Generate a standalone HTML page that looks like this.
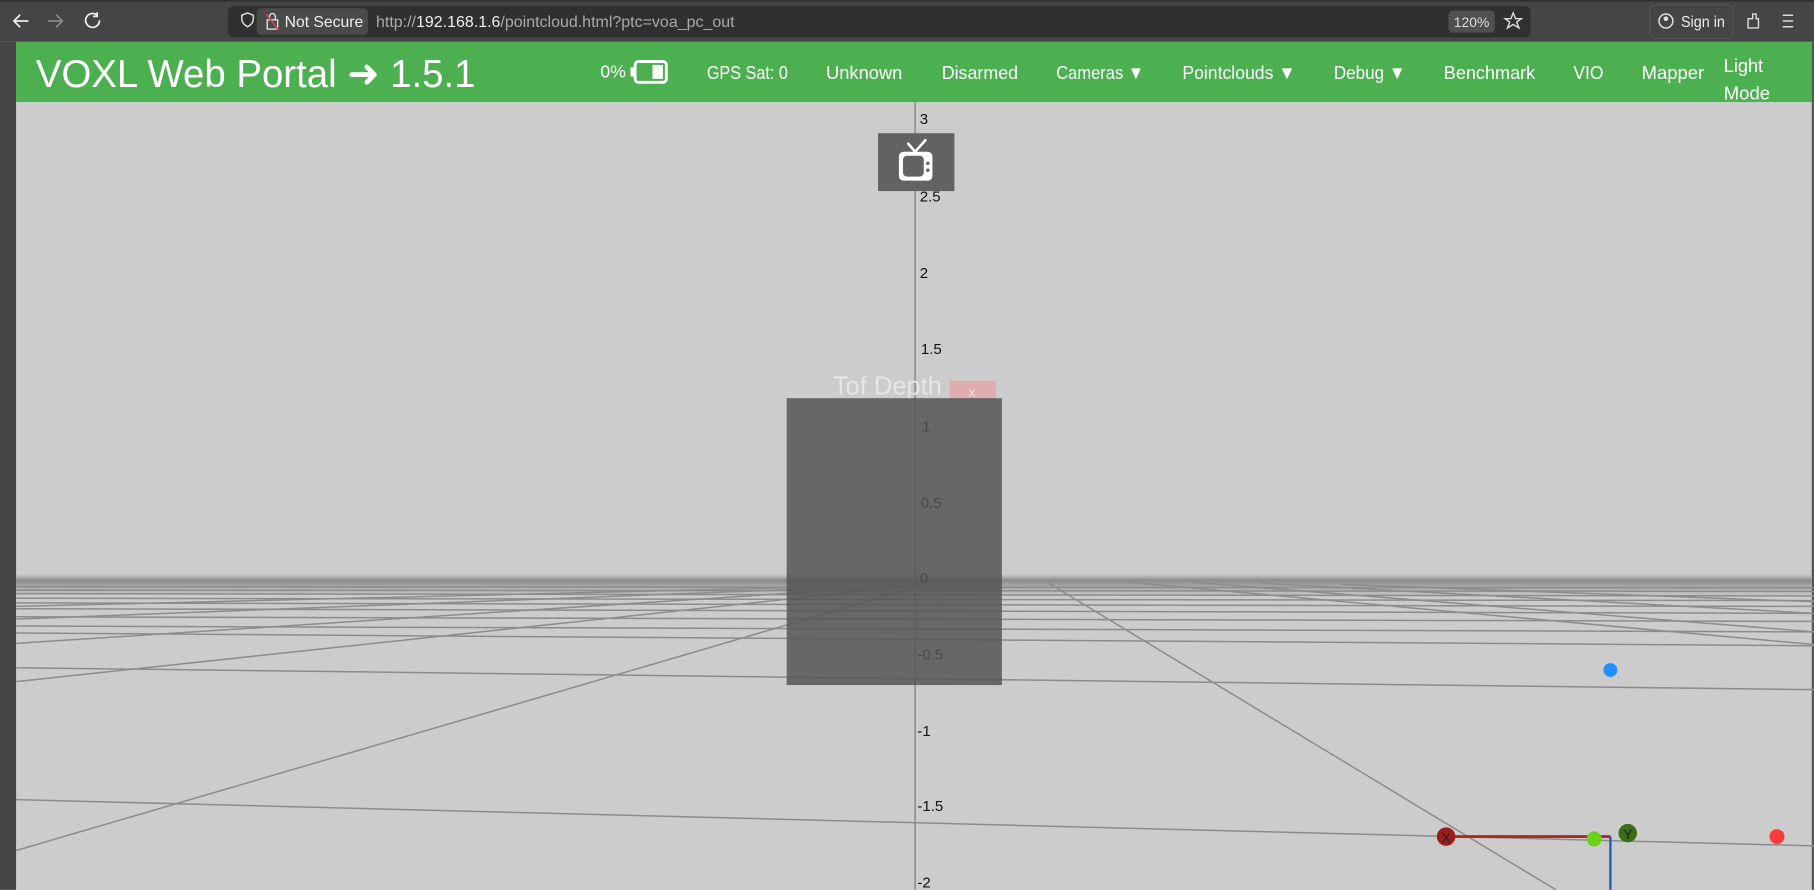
<!DOCTYPE html>
<html><head><meta charset="utf-8"><style>
html,body{margin:0;padding:0;width:1814px;height:890px;overflow:hidden;background:#ccc}
svg{display:block}
text{font-family:"Liberation Sans",sans-serif}
</style></head><body>
<svg width="1814" height="890" viewBox="0 0 1568 769" xmlns="http://www.w3.org/2000/svg">
<!-- browser chrome -->
<rect x="0" y="0" width="1568" height="36" fill="#454545"/>
<rect x="0" y="0" width="1568" height="1" fill="#222"/>
<g stroke="#eee" stroke-width="1.5" fill="none" stroke-linecap="round">
<path d="M12 18h12M12 18l5-5M12 18l5 5"/>
<path d="M42 18h12M54 18l-5-5M54 18l-5 5" stroke="#888"/>
<path d="M84 13a6 6 0 1 0 2 5M84 11v3h-3"/>
</g>
<rect x="197" y="5" width="1126" height="27" rx="5" fill="#303030"/>
<path d="M209 13l5-2 5 2v3c0 4-3 6-5 7c-2-1-5-3-5-7z" fill="none" stroke="#ddd" stroke-width="1.3"/>
<rect x="222" y="7" width="96" height="23" rx="4" fill="#4a4a4a"/>
<rect x="231" y="17" width="9" height="8" fill="none" stroke="#ddd" stroke-width="1.2"/>
<path d="M233 17v-3a2.5 2.5 0 0 1 5 0v3" fill="none" stroke="#ddd" stroke-width="1.2"/>
<path d="M230 12l11 14" stroke="#e04050" stroke-width="1.3"/>
<text x="246" y="23" font-size="13.5" fill="#eee" textLength="68" lengthAdjust="spacingAndGlyphs">Not Secure</text>
<text x="325" y="23" font-size="13.5" fill="#aaa" textLength="310" lengthAdjust="spacingAndGlyphs">http://<tspan fill="#eee">192.168.1.6</tspan>/pointcloud.html?ptc=voa_pc_out</text>
<rect x="1252" y="9" width="40" height="19" rx="4" fill="#505050"/>
<text x="1272" y="23" font-size="12" fill="#ddd" text-anchor="middle">120%</text>
<path d="M1308 11l2 5h5l-4 3 2 5-5-3-5 3 2-5-4-3h5z" fill="none" stroke="#ddd" stroke-width="1.2"/>
<rect x="1426" y="4" width="72" height="29" rx="5" fill="none" stroke="#555"/>
<circle cx="1440" cy="18" r="6" fill="none" stroke="#ddd" stroke-width="1.3"/>
<circle cx="1440" cy="16" r="2" fill="#ddd"/>
<text x="1453" y="23" font-size="13.5" fill="#eee" textLength="38" lengthAdjust="spacingAndGlyphs">Sign in</text>
<path d="M1511 24v-8h4v-4h3v4h2v8z" fill="none" stroke="#ddd" stroke-width="1.2"/>
<path d="M1541 13h9M1541 18h9M1541 23h9" stroke="#ddd" stroke-width="1.3"/>
<!-- left gutter -->
<rect x="0" y="36" width="14" height="733" fill="#454545"/>
<rect x="1566" y="36" width="2" height="733" fill="#555"/>
<!-- green nav -->
<rect x="14" y="36" width="1552" height="52" fill="#4caf50"/>
<text x="31" y="75" font-size="34" fill="#fff" textLength="380" lengthAdjust="spacingAndGlyphs">VOXL Web Portal ➜ 1.5.1</text>
<g font-size="16" fill="#fff">
<text x="519" y="67" font-size="15" textLength="22" lengthAdjust="spacingAndGlyphs">0%</text>
<text x="611" y="68" textLength="70" lengthAdjust="spacingAndGlyphs">GPS Sat: 0</text>
<text x="714" y="68" textLength="66" lengthAdjust="spacingAndGlyphs">Unknown</text>
<text x="814" y="68" textLength="66" lengthAdjust="spacingAndGlyphs">Disarmed</text>
<text x="913" y="68" textLength="76" lengthAdjust="spacingAndGlyphs">Cameras ▼</text>
<text x="1022" y="68" textLength="98" lengthAdjust="spacingAndGlyphs">Pointclouds ▼</text>
<text x="1153" y="68" textLength="62" lengthAdjust="spacingAndGlyphs">Debug ▼</text>
<text x="1248" y="68" textLength="79" lengthAdjust="spacingAndGlyphs">Benchmark</text>
<text x="1360" y="68" textLength="26" lengthAdjust="spacingAndGlyphs">VIO</text>
<text x="1419" y="68" textLength="54" lengthAdjust="spacingAndGlyphs">Mapper</text>
<text x="1490" y="62" textLength="34" lengthAdjust="spacingAndGlyphs">Light</text>
<text x="1490" y="86" textLength="40" lengthAdjust="spacingAndGlyphs">Mode</text>
</g>
<rect x="549" y="53" width="27" height="18" rx="3" fill="none" stroke="#fff" stroke-width="2.5"/>
<rect x="545" y="58" width="4" height="8" fill="#fff"/>
<rect x="564" y="56" width="9" height="12" fill="#fff"/>
<!-- 3D scene -->
<rect x="14" y="88" width="1552" height="681" fill="#cccccc"/>
<defs><linearGradient id="hz" x1="0" y1="0" x2="0" y2="1">
<stop offset="0" stop-color="#999" stop-opacity="0"/><stop offset="0.3" stop-color="#8a8a8a"/><stop offset="1" stop-color="#aaa" stop-opacity="0.3"/></linearGradient></defs>
<rect x="14" y="496" width="1552" height="18" fill="url(#hz)"/>
<g stroke="#8c8c8c" stroke-width="1.3" fill="none">
<path d="M14 507L1568 508M14 510L1568 511M14 513L1568 515M14 517L1568 519M14 521L1568 524M14 526L1568 530M14 533L1568 537M14 541L1568 546M14 547L1568 558M14 577L1568 596M14 691L1568 731"/>
<path d="M14 735L800 505M14 589L800 505M14 556L800 505M14 535L800 505M14 524L800 505"/>
<path d="M905 503L1345 769M975 503L1568 557M1030 503L1568 546M1090 504L1568 530M1160 505L1568 520"/>
</g>
<!-- vertical axis -->
<line x1="791" y1="88" x2="791" y2="769" stroke="#777" stroke-width="1"/>
<g font-size="13" fill="#111">
<text x="795" y="107">3</text><text x="795" y="174">2.5</text><text x="795" y="240">2</text>
<text x="796" y="306">1.5</text><text x="797" y="373">1</text><text x="796" y="439">0.5</text>
<text x="795" y="504">0</text><text x="793" y="570">-0.5</text><text x="793" y="636">-1</text>
<text x="793" y="701">-1.5</text><text x="793" y="767">-2</text>
</g>
<!-- tv box -->
<rect x="759" y="115" width="66" height="50" fill="#626262"/>
<rect x="777" y="131" width="29" height="25" rx="4" fill="#fff"/>
<rect x="780.5" y="134.5" width="18" height="18" rx="3.5" fill="#626262"/>
<circle cx="802" cy="141" r="1.5" fill="#626262"/><circle cx="802" cy="147" r="1.5" fill="#626262"/>
<path d="M785 124l6 7 9-10" stroke="#fff" stroke-width="2.2" fill="none" stroke-linecap="round"/>
<!-- tof panel -->
<text x="720" y="341" font-size="22" fill="#e6e6e6">Tof Depth</text>
<rect x="821" y="329" width="40" height="17" fill="#e0a8a8" opacity="0.85"/>
<text x="837" y="343" font-size="13" fill="#f4dede">x</text>
<rect x="680" y="344" width="186" height="248" fill="#555" opacity="0.85"/>
<!-- dots/axes -->
<circle cx="1392" cy="579" r="6" fill="#1e90ff"/>
<circle cx="1536" cy="723" r="6.5" fill="#ff3b3b"/>
<line x1="1250" y1="723" x2="1392" y2="723" stroke="#a52a2a" stroke-width="2.5"/>
<line x1="1392" y1="723" x2="1392" y2="769" stroke="#1a5fb4" stroke-width="2"/>
<circle cx="1250" cy="723" r="8" fill="#9b1c1c"/>
<text x="1250" y="728" font-size="12" fill="#222" text-anchor="middle">X</text>
<circle cx="1378" cy="725" r="6.5" fill="#6ccf1e"/>
<circle cx="1407" cy="720" r="8" fill="#3b6e14"/>
<text x="1407" y="725" font-size="12" fill="#222" text-anchor="middle">Y</text>
</svg>
</body></html>
